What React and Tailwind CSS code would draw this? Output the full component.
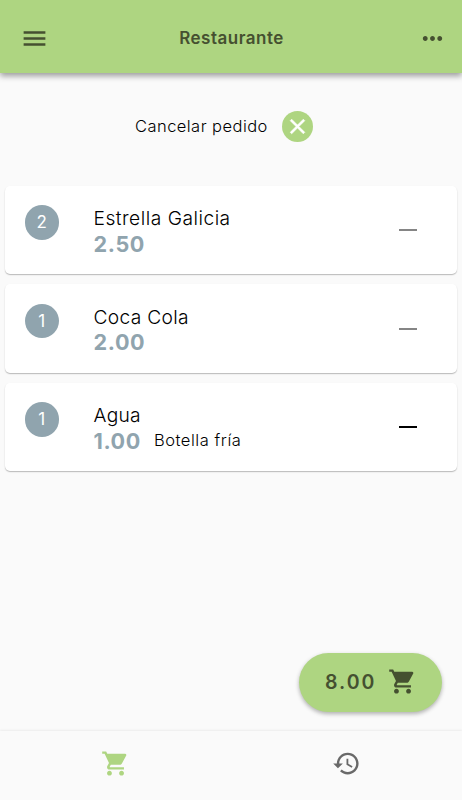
const CART =
  'M7 18c-1.1 0-1.99.9-1.99 2S5.9 22 7 22s2-.9 2-2-.9-2-2-2zM1 2v2h2l3.6 7.59-1.35 2.45c-.16.28-.25.61-.25.96 0 1.1.9 2 2 2h12v-2H7.42c-.14 0-.25-.11-.25-.25l.03-.12.9-1.63h7.45c.75 0 1.41-.41 1.75-1.03l3.58-6.49A1.003 1.003 0 0 0 20 4H5.21l-.94-2H1zm16 16c-1.1 0-1.99.9-1.99 2s.89 2 1.99 2 2-.9 2-2-.9-2-2-2z';
const HISTORY =
  'M13 3c-4.97 0-9 4.03-9 9H1l3.89 3.89.07.14L9 12H6c0-3.87 3.13-7 7-7s7 3.13 7 7-3.13 7-7 7c-1.93 0-3.68-.79-4.94-2.06l-1.42 1.42C8.27 19.99 10.51 21 13 21c4.97 0 9-4.03 9-9s-4.03-9-9-9zm-1 5v5l4.28 2.54.72-1.21-3.5-2.08V8H12z';
const MENU = 'M3 18h18v-2H3v2zm0-5h18v-2H3v2zm0-7v2h18V6H3z';
const MORE =
  'M6 10c-1.1 0-2 .9-2 2s.9 2 2 2 2-.9 2-2-.9-2-2-2zm12 0c-1.1 0-2 .9-2 2s.9 2 2 2 2-.9 2-2-.9-2-2-2zm-6 0c-1.1 0-2 .9-2 2s.9 2 2 2 2-.9 2-2-.9-2-2-2z';
const CLOSE =
  'M19 6.41L17.59 5 12 10.59 6.41 5 5 6.41 10.59 12 5 17.59 6.41 19 12 13.41 17.59 19 19 17.59 13.41 12z';

function Icon({ d, className = '' }) {
  return (
    <svg viewBox="0 0 24 24" fill="currentColor" className={`block shrink-0 ${className}`}>
      <path d={d} />
    </svg>
  );
}

const items = [
  { count: 2, name: 'Estrella Galicia', price: '2.50', nameClass: 'tracking-[0.5px]', dash: 'mt-[43.5px] bg-[#858585]' },
  { count: 1, name: 'Coca Cola', price: '2.00', nameClass: 'pt-px -mb-px tracking-[0.3px]', dash: 'mt-11 bg-[#858585]' },
  { count: 1, name: 'Agua', price: '1.00', note: 'Botella fría', nameClass: 'tracking-[0.3px]', dash: 'mt-[43.5px] bg-black' },
];

function Item({ count, name, price, note, nameClass, dash }) {
  return (
    <li className="flex h-[88.5px] rounded-[5px] bg-white pl-[19.5px] shadow-[0_1px_1px_rgba(0,0,0,0.2),0_1px_2px_rgba(0,0,0,0.08)]">
      <span className="mt-[19.5px] flex size-[34.5px] shrink-0 items-center justify-center rounded-full bg-[#90a4ae] pt-px text-[17px] text-white">
        {count}
      </span>
      <div className="ml-[34.5px] flex-1 pt-[19px]">
        <div className={`text-[19.2px] leading-[26px] font-light text-black ${nameClass}`}>{name}</div>
        <div className="flex items-center leading-[26px]">
          <span className="text-[21.6px] font-bold tracking-[0.6px] text-[#90a4ae]">{price}</span>
          {note && (
            <span className="relative -top-px ml-[13px] text-[16.5px] font-light tracking-[0.55px] text-black">
              {note}
            </span>
          )}
        </div>
      </div>
      <span className={`mr-[40.5px] h-0.5 w-[17.5px] ${dash}`} />
    </li>
  );
}

export default function App() {
  return (
    <div className="relative flex h-[800px] w-[462px] flex-col overflow-hidden bg-[#fafafa] font-['Inter',sans-serif]">
      <header className="flex h-[73px] shrink-0 items-center justify-between bg-[#aed581] pt-[3px] pr-[15px] pl-5 text-[#455030] shadow-[0_3px_6px_rgba(0,0,0,0.38)]">
        <Icon d={MENU} className="size-[29px]" />
        <h1 className="mt-px mr-[4px] text-[17px] font-semibold tracking-[0.5px]">Restaurante</h1>
        <Icon d={MORE} className="size-[29px]" />
      </header>
      <div className="mt-[38px] flex h-[31px] shrink-0 items-center pl-[135px]">
        <span className="w-[147px] text-[16.5px] font-light tracking-[0.45px] text-black">Cancelar pedido</span>
        <span className="flex size-[31px] items-center justify-center rounded-full bg-[#aed581] text-white">
          <Icon d={CLOSE} className="size-[25px] stroke-white stroke-[0.6]" />
        </span>
      </div>
      <ul className="mt-[43.5px] flex flex-1 flex-col gap-2.5 px-[5px]">
        {items.map((item) => (
          <Item key={item.name} {...item} />
        ))}
      </ul>
      <nav className="grid h-[69px] shrink-0 grid-cols-2 items-center justify-items-center bg-[#fafafa] pb-1 shadow-[0_-1px_2px_rgba(0,0,0,0.06)]">
        <Icon d={CART} className="size-[29px] text-[#aed581]" />
        <Icon d={HISTORY} className="size-[29px] text-[#696969]" />
      </nav>
      <button className="absolute right-5 bottom-[88px] flex h-[59.5px] w-[143px] items-center rounded-full bg-[#aed581] pl-[26px] text-[#455030] shadow-[0_2px_4px_rgba(0,0,0,0.3)]">
        <span className="w-[63px] text-left text-[19.5px] font-semibold tracking-[2px]">8.00</span>
        <Icon d={CART} className="relative -top-px size-[29px]" />
      </button>
    </div>
  );
}
